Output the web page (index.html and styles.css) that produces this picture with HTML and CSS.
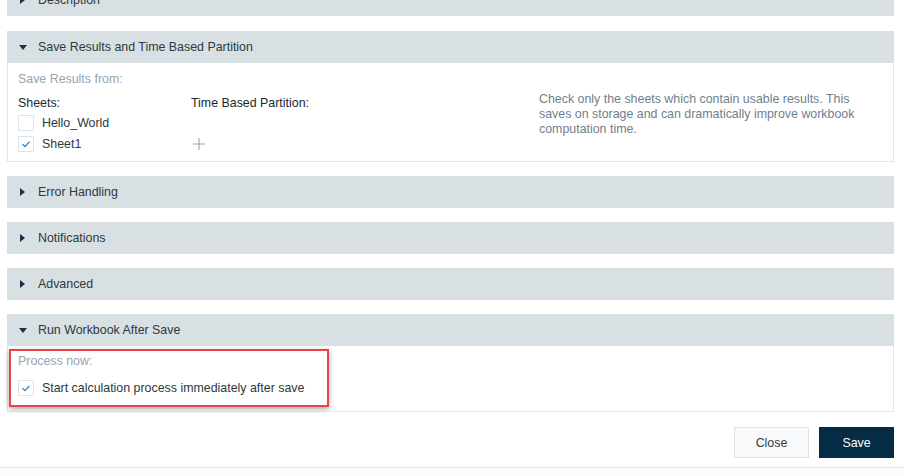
FILE: index.html
```html
<!DOCTYPE html>
<html>
<head>
<meta charset="utf-8">
<link rel="stylesheet" href="styles.css">
</head>
<body>
<div class="page">
  <div class="panel first">
    <div class="head"><span class="tri right"></span>Description</div>
  </div>

  <div class="panel">
    <div class="head"><span class="tri down"></span>Save Results and Time Based Partition</div>
    <div class="body results">
      <div class="label">Save Results from:</div>
      <div class="cols">
        <div class="col sheets">
          <div class="colhead">Sheets:</div>
          <div class="row"><span class="cb"></span>Hello_World</div>
          <div class="row"><span class="cb"><svg viewBox="0 0 16 16" width="16" height="16"><path d="M4.5 8.3 L7 10.6 L11.5 5.8" fill="none" stroke="#2a8bd6" stroke-width="1.3"/></svg></span>Sheet1</div>
        </div>
        <div class="col partition">
          <div class="colhead">Time Based Partition:</div>
          <div class="row"></div>
          <div class="row"><svg class="plus" viewBox="0 0 14 14" width="14" height="14"><path d="M7 1 V13 M1 7 H13" stroke="#9aaab6" stroke-width="1.2"/></svg></div>
        </div>
        <div class="hint">Check only the sheets which contain usable results. This saves on storage and can dramatically improve workbook computation time.</div>
      </div>
    </div>
  </div>

  <div class="panel">
    <div class="head"><span class="tri right"></span>Error Handling</div>
  </div>
  <div class="panel">
    <div class="head"><span class="tri right"></span>Notifications</div>
  </div>
  <div class="panel">
    <div class="head"><span class="tri right"></span>Advanced</div>
  </div>

  <div class="panel">
    <div class="head"><span class="tri down"></span>Run Workbook After Save</div>
    <div class="body run">
      <div class="label">Process now:</div>
      <div class="row"><span class="cb"><svg viewBox="0 0 16 16" width="16" height="16"><path d="M4.5 8.3 L7 10.6 L11.5 5.8" fill="none" stroke="#2a8bd6" stroke-width="1.3"/></svg></span>Start calculation process immediately after save</div>
      <div class="highlight"></div>
    </div>
  </div>

  <div class="actions">
    <button class="btn close">Close</button>
    <button class="btn save">Save</button>
  </div>
</div>
<div class="footer"></div>
</body>
</html>
```
FILE: styles.css
```css
html, body {
  margin: 0;
  padding: 0;
  background: #ffffff;
  font-family: "Liberation Sans", Arial, sans-serif;
  font-size: 12.4px;
  color: #2e3a44;
  overflow: hidden;
}
.page {
  margin-top: -16px;
  padding: 0 10px 0 7px;
}
.panel {
  margin-bottom: 14px;
}
.panel.first {
  margin-bottom: 15px;
}
.head {
  height: 32px;
  background: #d9e0e4;
  display: flex;
  align-items: center;
  padding-left: 12px;
  color: #2c3842;
  font-size: 12.4px;
}
.tri {
  width: 0;
  height: 0;
  margin-right: 14px;
  display: inline-block;
}
.tri.right {
  border-top: 4px solid transparent;
  border-bottom: 4px solid transparent;
  border-left: 5px solid #14324a;
  margin-left: 1px;
  margin-right: 13px;
}
.tri.down {
  border-left: 4px solid transparent;
  border-right: 4px solid transparent;
  border-top: 5px solid #14324a;
  margin-right: 11px;
}
.body {
  border: 1px solid #e2e7ea;
  border-top: none;
  padding: 0 10px;
  position: relative;
}
.label {
  color: #95a5b2;
  padding-top: 9px;
  height: 24px;
  box-sizing: border-box;
}
.results {
  height: 99px;
  box-sizing: border-box;
}
.cols {
  display: flex;
}
.col.sheets {
  width: 173px;
}
.col.partition {
  width: 348px;
}
.colhead {
  color: #1d262e;
  height: 18px;
  line-height: 18px;
  margin-top: 7px;
}
.row {
  height: 21px;
  display: flex;
  align-items: center;
  color: #2c3842;
}
.sheets .row:first-of-type {
  margin-top: -1px;
}
.cb {
  width: 16px;
  height: 16px;
  border: 1px solid #dde3e7;
  box-sizing: border-box;
  background: #fff;
  margin-right: 8px;
  display: inline-flex;
  align-items: center;
  justify-content: center;
}
.cb svg {
  display: block;
  flex: none;
}
.plus {
  margin-left: 1px;
}
.hint {
  color: #6f7f8c;
  line-height: 15px;
  width: 330px;
  padding-top: 5px;
}
.run {
  height: 66px;
  box-sizing: border-box;
}
.run .label {
  padding-top: 8px;
  height: 31px;
}
.highlight {
  position: absolute;
  left: 1px;
  top: 3px;
  width: 320px;
  height: 58px;
  border: 2px solid #ee4249;
  box-sizing: border-box;
  box-shadow: 0 2px 5px rgba(0,0,0,0.35);
}
.actions {
  display: flex;
  justify-content: flex-end;
  gap: 10px;
  margin-top: 15px;
}
.btn {
  width: 75px;
  height: 31px;
  font-family: "Liberation Sans", Arial, sans-serif;
  font-size: 12.4px;
  border: 1px solid #dde2e6;
  cursor: pointer;
}
.btn.close {
  background: #f8f9fa;
  color: #333d45;
}
.btn.save {
  background: #052b45;
  border-color: #052b45;
  color: #ffffff;
}
.footer {
  margin-top: 9px;
  border-top: 1px solid #dfe3e6;
  height: 20px;
  background: #fafbfc;
}
```
